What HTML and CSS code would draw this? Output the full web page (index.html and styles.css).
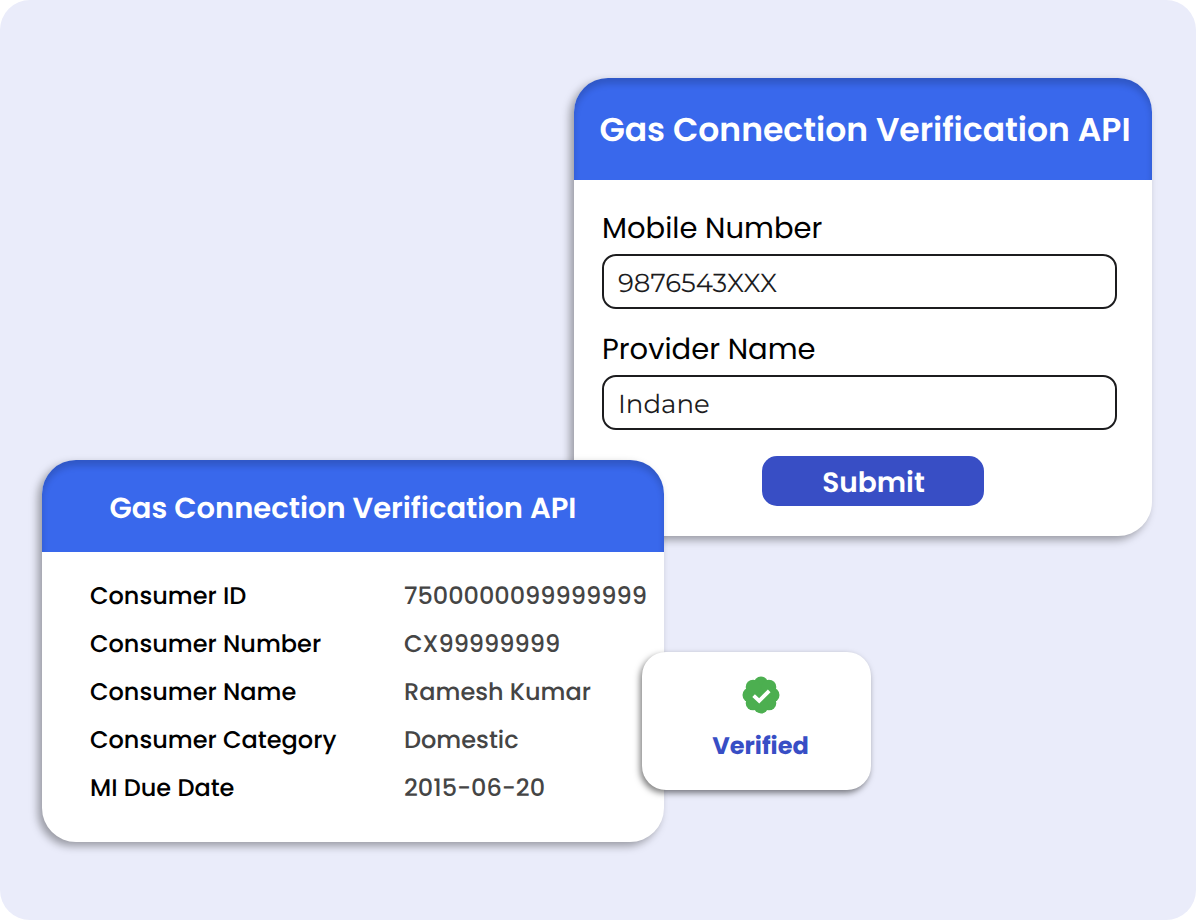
FILE: index.html
```html
<!DOCTYPE html>
<html lang="en">
<head>
<meta charset="utf-8">
<meta name="viewport" content="width=device-width, initial-scale=1">
<title>Gas Connection Verification API</title>
<link rel="stylesheet" href="styles.css">
</head>
<body>
<main class="stage">
  <section class="card request">
    <h1 class="card-header request-header">Gas Connection Verification API</h1>
    <form class="form">
      <label class="label" for="mobile">Mobile Number</label>
      <input class="field" id="mobile" type="text" value="9876543XXX">
      <label class="label" for="provider">Provider Name</label>
      <input class="field" id="provider" type="text" value="Indane">
      <button class="submit" type="button">Submit</button>
    </form>
  </section>

  <section class="card response">
    <h2 class="card-header response-header">Gas Connection Verification API</h2>
    <dl class="details">
      <dt>Consumer ID</dt><dd>7500000099999999</dd>
      <dt>Consumer Number</dt><dd>CX99999999</dd>
      <dt>Consumer Name</dt><dd>Ramesh Kumar</dd>
      <dt>Consumer Category</dt><dd>Domestic</dd>
      <dt>MI Due Date</dt><dd>2015-06-20</dd>
    </dl>
  </section>

  <aside class="status">
    <svg class="seal" viewBox="0 0 38 38" aria-hidden="true">
      <g fill="#4caf50">
        <circle cx="19" cy="19" r="15.6"/>
        <circle cx="19" cy="7.9" r="7.4"/>
        <circle cx="26.9" cy="11.1" r="7.4"/>
        <circle cx="30.1" cy="19" r="7.4"/>
        <circle cx="26.9" cy="26.9" r="7.4"/>
        <circle cx="19" cy="30.1" r="7.4"/>
        <circle cx="11.1" cy="26.9" r="7.4"/>
        <circle cx="7.9" cy="19" r="7.4"/>
        <circle cx="11.1" cy="11.1" r="7.4"/>
      </g>
      <path d="M11.6 19.6l5.6 5.2 10-10" fill="none" stroke="#fff" stroke-width="3.8"/>
    </svg>
    <span class="status-text">Verified</span>
  </aside>
</main>
</body>
</html>
```
FILE: styles.css
```css
* {
  box-sizing: border-box;
}

body {
  margin: 0;
  background: #fff;
  color: #000;
  font-family: Poppins, Inter, sans-serif;
  text-rendering: geometricPrecision;
}

/* The three cards share one grid and overlap on its lines. */
.stage {
  display: grid;
  grid-template-columns:
    minmax(0, 532fr) minmax(0, 68fr) minmax(0, 22fr)
    minmax(0, 207fr) minmax(0, 281fr);
  grid-template-rows: 382fr 76fr 116fr 138fr 52fr;
  min-height: 100vh;
  padding: 78px 44px 78px 42px;
  border-radius: 30px;
  background: #eaecfa;
}

.card {
  border-radius: 34px;
  background: #fff;
  box-shadow: -4px 4px 8px rgba(0, 0, 0, 0.35);
}

.request {
  grid-area: 1 / 2 / 3 / 6;
}

.response {
  grid-area: 2 / 1 / 6 / 4;
}

.card-header {
  display: flex;
  align-items: center;
  justify-content: center;
  margin: 0;
  border-radius: 34px 34px 0 0;
  background: #3968ec;
  box-shadow: inset 0 6px 6px rgba(0, 0, 0, 0.16);
  color: #fff;
  font-weight: 600;
  white-space: nowrap;
}

.request-header {
  height: 102px;
  padding: 2px 0 0 4px;
  font-size: 33px;
}

.response-header {
  height: 92px;
  padding: 6px 20px 0 0;
  font-size: 29px;
}

.form {
  display: flex;
  flex-direction: column;
  padding: 31px 35px 30px 28px;
}

.label {
  font-size: 29px;
  line-height: 36px;
}

.field {
  width: 100%;
  height: 55px;
  margin: 7px 0 23px;
  padding: 2px 14px 0;
  border: 2px solid #1c1c1e;
  border-radius: 14px;
  background: #fff;
  color: #1c1c1e;
  font-family: Montserrat, Inter, sans-serif;
  font-size: 26px;
  font-weight: 400;
  text-rendering: inherit;
}

.submit {
  align-self: center;
  width: 222px;
  height: 50px;
  margin: 3px 0 0 26px;
  padding: 4px 0 0 2px;
  border: 0;
  border-radius: 15px;
  background: #384ec5;
  color: #fff;
  font: 600 28px Poppins, Inter, sans-serif;
  text-rendering: inherit;
}

.details {
  display: grid;
  grid-template-columns: 314px 1fr;
  margin: 0;
  padding: 21px 0 29px 48px;
  font-size: 24px;
  font-weight: 500;
  line-height: 48px;
  white-space: nowrap;
}

.details dd {
  margin: 0;
  color: #454545;
}

.status {
  display: flex;
  grid-area: 4 / 3 / 5 / 5;
  flex-direction: column;
  align-items: center;
  gap: 18px;
  padding: 24px 0 0 8px;
  border-radius: 24px;
  background: #fff;
  box-shadow: -2px 3px 6px rgba(0, 0, 0, 0.5);
}

.seal {
  width: 38px;
  height: 38px;
}

.status-text {
  color: #384ec5;
  font-size: 24px;
  font-weight: 700;
  line-height: 30px;
}
```
